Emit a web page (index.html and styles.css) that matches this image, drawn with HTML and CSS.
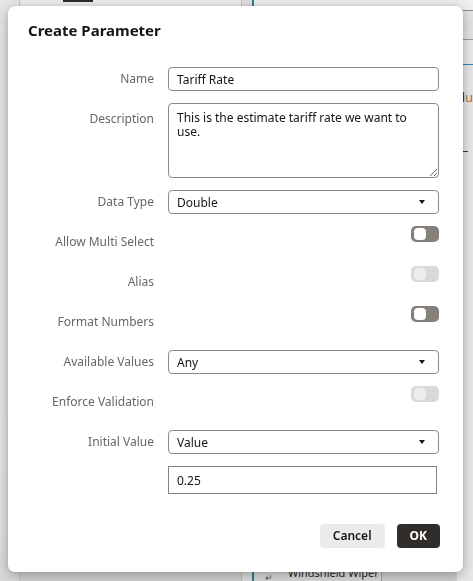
FILE: index.html
```html
<!DOCTYPE html>
<html lang="en">
<head>
<meta charset="utf-8">
<title>Create Parameter</title>
<link rel="stylesheet" href="styles.css">
</head>
<body>
<div class="app">
  <div class="rail"></div>
  <div class="nav"><div class="nav-icon"></div></div>
  <div class="sep"></div>
  <div class="main">
    <div class="main-col">
      <div class="main-title">Tariff Rates</div>
      <div class="main-foot">
        <div class="foot-cell">
          <span class="foot-icon">↵</span>
          <span class="foot-text">Windshield Wiper</span>
        </div>
      </div>
    </div>
    <div class="side-col">
      <div class="side-top"></div>
      <div class="side-tabs"></div>
      <div class="side-tool"></div>
      <div class="side-body">
        <div class="side-text"><span class="dk">d</span><span class="or">u</span></div>
        <div class="side-dash"></div>
      </div>
    </div>
  </div>
</div>

<div class="dialog" role="dialog" aria-labelledby="dlg-title">
  <h1 class="dialog-title" id="dlg-title">Create Parameter</h1>
  <div class="form">
    <label class="lbl">Name</label>
    <div class="cell cell-center"><div class="input">Tariff Rate</div></div>

    <label class="lbl lbl-top">Description</label>
    <div class="cell cell-area"><textarea class="area" readonly>This is the estimate tariff rate we want to use.</textarea></div>

    <label class="lbl">Data Type</label>
    <div class="cell cell-center"><div class="select"><span class="select-val">Double</span><span class="caret"></span></div></div>

    <label class="lbl">Allow Multi Select</label>
    <div class="cell cell-toggle"><span class="toggle"><span class="knob"></span></span></div>

    <label class="lbl">Alias</label>
    <div class="cell cell-toggle"><span class="toggle toggle-disabled"><span class="knob"></span></span></div>

    <label class="lbl">Format Numbers</label>
    <div class="cell cell-toggle"><span class="toggle"><span class="knob"></span></span></div>

    <label class="lbl">Available Values</label>
    <div class="cell cell-center"><div class="select"><span class="select-val">Any</span><span class="caret"></span></div></div>

    <label class="lbl">Enforce Validation</label>
    <div class="cell cell-toggle"><span class="toggle toggle-disabled"><span class="knob"></span></span></div>

    <label class="lbl">Initial Value</label>
    <div class="cell cell-center"><div class="select"><span class="select-val">Value</span><span class="caret"></span></div></div>

    <span class="lbl-empty"></span>
    <div class="cell cell-value"><div class="value-input">0.25</div></div>
  </div>
  <div class="footer">
    <button class="btn btn-cancel" type="button">Cancel</button>
    <button class="btn btn-ok" type="button">OK</button>
  </div>
</div>
</body>
</html>
```

FILE: styles.css
```css
html, body {
  margin: 0;
  padding: 0;
  height: 100%;
}

body {
  background: #dcdcdc;
  font-family: "Noto Sans", "Open Sans", sans-serif;
  overflow: hidden;
}

.app {
  display: flex;
  height: 581px;
}

.rail {
  width: 19px;
  background: linear-gradient(#e6e6e6 0, #e3e3e3 90%, #dadada 100%);
  border-right: 1px solid #c6c6c6;
}

.nav {
  width: 227px;
  background: linear-gradient(#ececec 0, #e5e5e5 88%, #d3d3d3 100%);
  border-right: 1px solid #c2c2c2;
}

.nav-icon {
  width: 30px;
  height: 2px;
  margin-left: 43px;
  background: #2a2a2a;
}

.sep {
  width: 10px;
  background: #e0e0e0;
}

.main {
  flex: 1;
  display: flex;
  border-left: 2px solid #2f7f93;
  background: #ececec;
}

.main-col {
  width: 203px;
  display: flex;
  flex-direction: column;
}

.main-title {
  margin-top: -11px;
  padding-left: 13px;
  font-size: 12px;
  line-height: 14px;
  color: #1a1a1a;
}

.main-foot {
  margin-top: auto;
  height: 20px;
  display: flex;
  background: #d2d2d2;
}

.foot-cell {
  width: 128px;
  box-sizing: border-box;
  border-right: 1px solid #a5a5a5;
  background: #dcdcdc;
  display: flex;
  align-items: flex-start;
}

.foot-icon {
  margin-left: 11px;
  margin-top: 13px;
  font-size: 9px;
  line-height: 8px;
  color: #555;
}

.foot-text {
  margin-left: 15px;
  margin-top: 4px;
  font-size: 11px;
  line-height: 16px;
  color: #1f1f1f;
  white-space: nowrap;
}

.side-col {
  flex: 1;
  display: flex;
  flex-direction: column;
  background: #e8e8e8;
}

.side-top {
  height: 10px;
  background: #efefef;
  border-bottom: 1px solid #8d8d8d;
}

.side-tabs {
  height: 28px;
  background: #e3e3e3;
  border-bottom: 1px solid #9c9c9c;
}

.side-tool {
  height: 24px;
  background: #eaeaea;
  border-bottom: 1px solid #3b81b6;
}

.side-body {
  flex: 1;
  padding-top: 24px;
}

.side-text {
  font-size: 13px;
  line-height: 16px;
}

.dk { color: #202020; }
.or { color: #c06a1e; }

.side-dash {
  margin-top: 46px;
  margin-left: 3px;
  width: 8px;
  height: 1px;
  background: #333;
}

/* ---------- dialog ---------- */
.dialog {
  position: fixed;
  left: 8px;
  top: 6px;
  width: 455px;
  height: 566px;
  box-sizing: border-box;
  padding: 14px 24px 24px 20px;
  background: #ffffff;
  border-radius: 7px;
  box-shadow: 0 4px 14px rgba(0, 0, 0, 0.28), 0 0 4px rgba(0, 0, 0, 0.1);
  display: flex;
  flex-direction: column;
  color: #161513;
}

.dialog-title {
  margin: 0 0 19px 0;
  font-size: 15px;
  line-height: 20px;
  font-weight: 700;
  color: #161513;
}

.form {
  display: grid;
  grid-template-columns: 126px 271px;
  column-gap: 14px;
}

.lbl {
  height: 40px;
  display: flex;
  align-items: center;
  justify-content: flex-end;
  text-align: right;
  font-size: 12px;
  line-height: 18px;
  color: #6b6661;
  white-space: nowrap;
}

.lbl-top {
  align-self: start;
}

.cell {
  min-height: 40px;
  display: flex;
}

.cell-center {
  align-items: center;
}

.cell-area {
  padding: 4px 0;
}

.cell-toggle {
  align-items: flex-start;
  justify-content: flex-end;
  padding-top: 4px;
  box-sizing: border-box;
}

.cell-value {
  padding-top: 4px;
  min-height: 0;
}

.input,
.select {
  width: 100%;
  height: 24px;
  box-sizing: border-box;
  border: 1px solid #8f8a85;
  border-radius: 4px;
  padding: 0 8px;
  display: flex;
  align-items: center;
  font-size: 12px;
  color: #161513;
  background: #fff;
}

.select-val {
  flex: 1;
}

.caret {
  width: 0;
  height: 0;
  border-left: 3.5px solid transparent;
  border-right: 3.5px solid transparent;
  border-top: 4px solid #161513;
  margin-right: 5px;
}

.area {
  width: 100%;
  height: 75px;
  box-sizing: border-box;
  border: 1px solid #8f8a85;
  border-radius: 4px;
  padding: 7px 8px 4px 8px;
  font-family: "Noto Sans", "Open Sans", sans-serif;
  font-size: 12px;
  line-height: 14px;
  color: #161513;
  resize: vertical;
  outline: none;
  display: block;
  margin: 0;
}

.toggle {
  width: 28px;
  height: 16px;
  border-radius: 5px;
  background: #86807b;
  box-sizing: border-box;
  padding: 2px 3px;
  display: inline-flex;
}

.knob {
  width: 12px;
  height: 12px;
  border-radius: 4px;
  background: #ffffff;
}

.toggle-disabled {
  background: #d9d9d9;
}

.toggle-disabled .knob {
  background: #ededed;
}

.value-input {
  width: 269px;
  height: 28px;
  box-sizing: border-box;
  border: 1px solid #8a8480;
  padding: 0 8px;
  display: flex;
  align-items: center;
  font-size: 12px;
  color: #161513;
}

.footer {
  margin-top: auto;
  margin-right: -1px;
  display: flex;
  justify-content: flex-end;
  gap: 12px;
}

.btn {
  height: 24px;
  border: none;
  border-radius: 4px;
  padding: 0 13px;
  font-family: "Noto Sans", "Open Sans", sans-serif;
  font-size: 12px;
  font-weight: 600;
  line-height: 24px;
  cursor: pointer;
}

.btn-cancel {
  background: #edebe9;
  color: #161513;
}

.btn-ok {
  background: #312d2a;
  color: #ffffff;
  font-weight: 700;
}
```
